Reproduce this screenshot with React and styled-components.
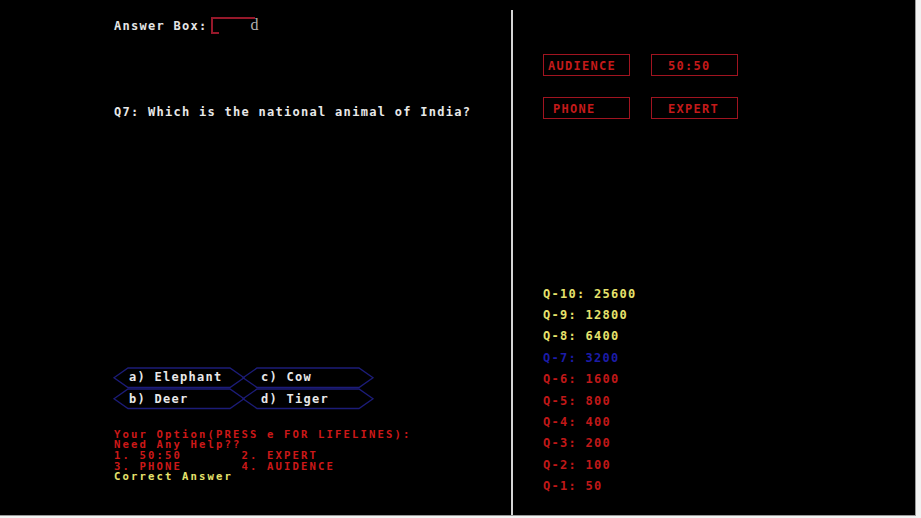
import React from 'react'
import styled, { createGlobalStyle } from 'styled-components';

const GlobalStyle = createGlobalStyle`
  html, body {
    margin: 0;
    padding: 0;
    background: #f2f2f2;
  }
`

const Screen = styled.div`
  width: 915px;
  height: 515px;
  background: #000;
  border-right: 1px solid #9a9a9a;
  border-bottom: 1px solid #9a9a9a;
  display: flex;
  font-family: "DejaVu Sans Mono", "Liberation Mono", monospace;
  font-weight: bold;
  font-size: 12px;
  letter-spacing: 1.28px;
  overflow: hidden;
`
const LeftPanel = styled.div`
  width: 511px;
  padding-left: 114px;
  box-sizing: border-box;
  display: flex;
  flex-direction: column;
`
const Divider = styled.div`
  width: 2px;
  margin-top: 10px;
  background: #d4d4d4;
`
const RightPanel = styled.div`
  flex: 1;
  padding-left: 30px;
  display: flex;
  flex-direction: column;
`
const AnswerRow = styled.div`
  margin-top: 16px;
  height: 17px;
  display: flex;
  align-items: center;
  padding-top: 1px;
  color: #e4e4e4;
`
const AnswerBox = styled.div`
  position: relative;
  width: 44px;
  height: 17px;
  margin-left: 3px;
  margin-top: -1px;
  box-sizing: border-box;
  border-top: 2px solid #96182a;
  border-left: 2px solid #96182a;
  &::after {
    content: '';
    position: absolute;
    left: -2px;
    bottom: 0;
    width: 8px;
    border-bottom: 2px solid #96182a;
  }
`
const Typed = styled.span`
  font-family: "Liberation Serif", serif;
  font-weight: normal;
  font-size: 16px;
  letter-spacing: 0;
  color: #b0b0b0;
  margin-left: -4px;
  margin-top: -1px;
`
const Question = styled.div`
  margin-top: 70.5px;
  line-height: 14px;
  color: #e8e8e8;
  white-space: pre;
`
const Options = styled.div`
  margin-top: 248px;
  display: grid;
  grid-template-columns: 129px 130px;
  grid-auto-rows: 21.5px;
`
const OptionCell = styled.div`
  position: relative;
  display: flex;
  align-items: center;
  padding-left: ${p => p.$pad}px;
  color: #e8e8e8;
`
const Hex = styled.svg`
  position: absolute;
  left: 0;
  top: 0;
  overflow: visible;
`
const OptionText = styled.span`
  position: relative;
`
const Messages = styled.div`
  margin-top: ${p => p.$top || 0}px;
  font-size: 10.6px;
  letter-spacing: 2.12px;
  line-height: 10.7px;
  white-space: pre;
  color: ${p => p.$color || '#cc1818'};
`
const Lifelines = styled.div`
  margin-top: 54px;
  display: grid;
  grid-template-columns: 87px 87px;
  grid-auto-rows: 22px;
  column-gap: 21px;
  row-gap: 21px;
`
const LifelineBox = styled.div`
  border: 1.5px solid #a01420;
  box-sizing: border-box;
  display: flex;
  align-items: center;
  padding-left: ${p => p.$pad}px;
  padding-top: 1px;
  color: #c41a1a;
`
const Prizes = styled.div`
  margin-top: 164.5px;
  display: flex;
  flex-direction: column;
`
const Prize = styled.div`
  line-height: 21.4px;
  white-space: pre;
  color: ${p => p.$color};
`

const Option = ({ label, pad }) => (
  <OptionCell $pad={pad}>
    <Hex width="130" height="21.5" viewBox="0 0 130 21.5">
      <polygon
        points="0,10.75 14,1 116,1 130,10.75 116,20.5 14,20.5"
        fill="none"
        stroke="#1c1c78"
        strokeWidth="1.3"
      />
    </Hex>
    <OptionText>{label}</OptionText>
  </OptionCell>
)

const lifelines = [
  { name: 'AUDIENCE', pad: 4 },
  { name: '50:50', pad: 16 },
  { name: 'PHONE', pad: 9 },
  { name: 'EXPERT', pad: 16 },
]

const prizes = [
  ['Q-10: 25600', '#e6e26c'],
  ['Q-9: 12800', '#e6e26c'],
  ['Q-8: 6400', '#e6e26c'],
  ['Q-7: 3200', '#1c1ca8'],
  ['Q-6: 1600', '#c01818'],
  ['Q-5: 800', '#c01818'],
  ['Q-4: 400', '#c01818'],
  ['Q-3: 200', '#c01818'],
  ['Q-2: 100', '#c01818'],
  ['Q-1: 50', '#c01818'],
]

const App = () => {
  return (
    <>
      <GlobalStyle />
      <Screen>
        <LeftPanel>
          <AnswerRow>
            Answer Box:
            <AnswerBox />
            <Typed>d</Typed>
          </AnswerRow>

          <Question>Q7: Which is the national animal of India?</Question>

          <Options>
            <Option label="a) Elephant" pad={15} />
            <Option label="c) Cow" pad={18} />
            <Option label="b) Deer" pad={15} />
            <Option label="d) Tiger" pad={18} />
          </Options>

          <Messages $top={19}>
            {'Your Option(PRESS e FOR LIFELINES):\nNeed Any Help??\n1. 50:50       2. EXPERT\n3. PHONE       4. AUIDENCE'}
          </Messages>
          <Messages $color="#e6e26c">Correct Answer</Messages>
        </LeftPanel>

        <Divider />

        <RightPanel>
          <Lifelines>
            {lifelines.map(l => (
              <LifelineBox key={l.name} $pad={l.pad}>{l.name}</LifelineBox>
            ))}
          </Lifelines>

          <Prizes>
            {prizes.map(([text, color]) => (
              <Prize key={text} $color={color}>{text}</Prize>
            ))}
          </Prizes>
        </RightPanel>
      </Screen>
    </>
  )
}

export default App
